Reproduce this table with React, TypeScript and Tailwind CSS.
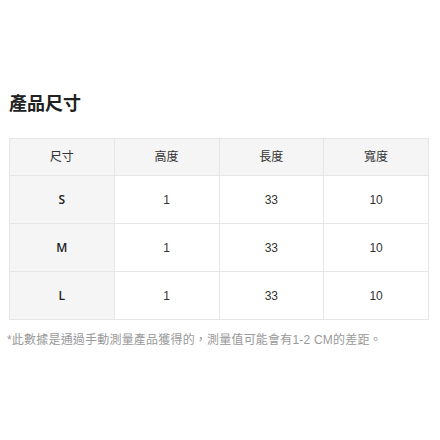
const rows = [
  { size: "S", height: "1", length: "33", width: "10" },
  { size: "M", height: "1", length: "33", width: "10" },
  { size: "L", height: "1", length: "33", width: "10" },
]

const font = { fontFamily: '"Liberation Sans", "Noto Sans CJK TC", sans-serif' }

export default function App() {
  return (
    <div className="w-[440px] h-[440px] bg-white pt-[92px] pl-[9px]" style={font}>
      {/* Title */}
      <h2 className="text-[18px] leading-[24px] font-bold text-[#222] mb-[22px]">產品尺寸</h2>

      {/* Size table */}
      <table className="w-[420px] table-fixed border-collapse text-[12px] text-[#333]">
        <thead>
          <tr className="h-[37px] bg-[#f5f5f5]">
            <th className="border border-[#e6e6e6] font-normal">尺寸</th>
            <th className="border border-[#e6e6e6] font-normal">高度</th>
            <th className="border border-[#e6e6e6] font-normal">長度</th>
            <th className="border border-[#e6e6e6] font-normal">寬度</th>
          </tr>
        </thead>
        <tbody>
          {rows.map((r) => (
            <tr key={r.size} className="h-[48px]">
              <td className="border border-[#e6e6e6] bg-[#f5f5f5] text-center font-semibold text-[#222] font-['Open_Sans',sans-serif]">
                {r.size}
              </td>
              <td className="border border-[#e6e6e6] text-center">{r.height}</td>
              <td className="border border-[#e6e6e6] text-center">{r.length}</td>
              <td className="border border-[#e6e6e6] text-center">{r.width}</td>
            </tr>
          ))}
        </tbody>
      </table>

      {/* Note */}
      <p className="mt-[12px] -ml-[2px] text-[12px] leading-[16px] tracking-[0.2px] text-[#999]">
        *此數據是通過手動測量產品獲得的，測量值可能會有1-2 CM的差距。
      </p>
    </div>
  )
}
